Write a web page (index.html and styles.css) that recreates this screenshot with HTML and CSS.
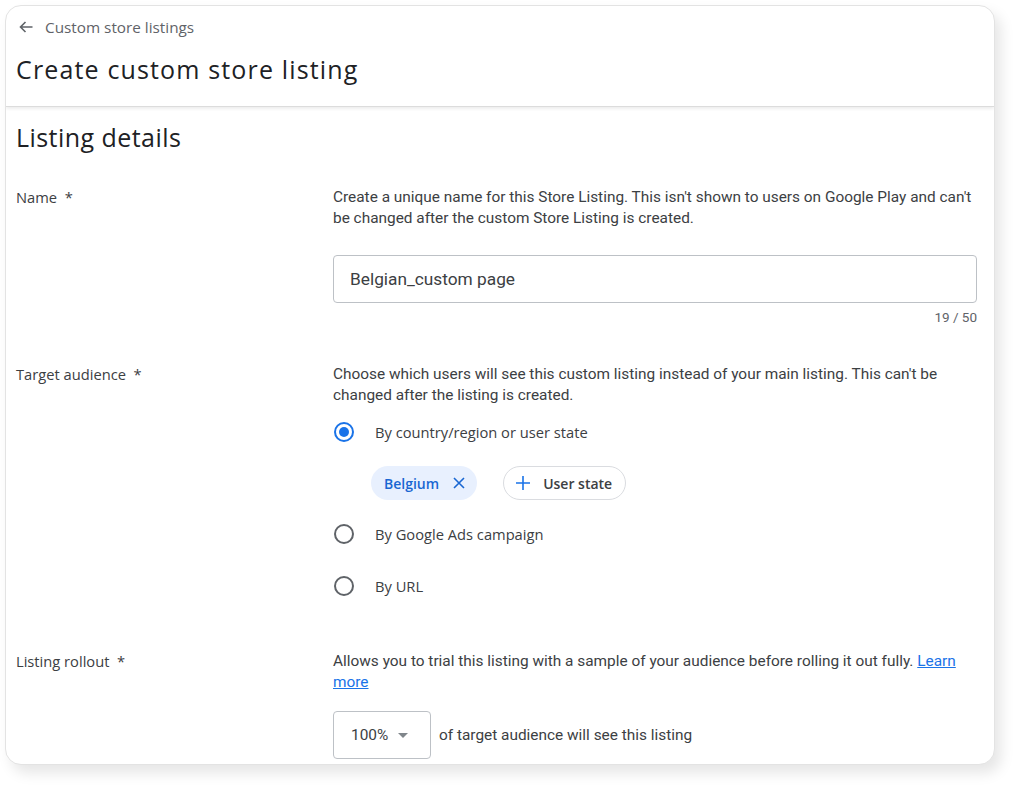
FILE: index.html
```html
<!DOCTYPE html>
<html>
<head>
<meta charset="utf-8">
<link rel="stylesheet" href="styles.css">
</head>
<body>
<div class="stage">
  <div class="card">
    <header class="page-header">
      <div class="crumb">
        <svg class="crumb-arrow" width="14" height="12" viewBox="0 0 14 12"><path d="M13.5 6H1.5M6.5 1L1.5 6L6.5 11" stroke="#5f6368" stroke-width="1.6" fill="none"/></svg>
        <span>Custom store listings</span>
      </div>
      <h1 class="title">Create custom store listing</h1>
    </header>
    <main class="content">
      <h2 class="section-title">Listing details</h2>

      <div class="row row-name">
        <div class="label">Name&nbsp; *</div>
        <div class="field">
          <p class="desc">Create a unique name for this Store Listing. This isn't shown to users on Google Play and can't be changed after the custom Store Listing is created.</p>
          <div class="input">Belgian_custom page</div>
          <div class="counter">19 / 50</div>
        </div>
      </div>

      <div class="row row-audience">
        <div class="label">Target audience&nbsp; *</div>
        <div class="field">
          <p class="desc">Choose which users will see this custom listing instead of your main listing. This can't be changed after the listing is created.</p>
          <div class="radio-opt">
            <span class="radio checked"></span>
            <span class="radio-label">By country/region or user state</span>
          </div>
          <div class="chips">
            <span class="chip chip-selected">Belgium
              <svg class="chip-x" width="14" height="14" viewBox="0 0 14 14"><path d="M2 2L12 12M12 2L2 12" stroke="#1967d2" stroke-width="1.6" fill="none"/></svg>
            </span>
            <span class="chip chip-outline">
              <svg class="chip-plus" width="16" height="16" viewBox="0 0 16 16"><path d="M8 1V15M1 8H15" stroke="#1a73e8" stroke-width="1.6" fill="none"/></svg>
              User state
            </span>
          </div>
          <div class="radio-opt">
            <span class="radio"></span>
            <span class="radio-label">By Google Ads campaign</span>
          </div>
          <div class="radio-opt">
            <span class="radio"></span>
            <span class="radio-label">By URL</span>
          </div>
        </div>
      </div>

      <div class="row row-rollout">
        <div class="label">Listing rollout&nbsp; *</div>
        <div class="field">
          <p class="desc">Allows you to trial this listing with a sample of your audience before rolling it out fully. <a href="#" class="link">Learn more</a></p>
          <div class="rollout-line">
            <div class="select">100% <span class="caret"></span></div>
            <span class="rollout-text">of target audience will see this listing</span>
          </div>
        </div>
      </div>
    </main>
  </div>
</div>
</body>
</html>
```

FILE: styles.css
```css
html, body {
  margin: 0;
  padding: 0;
  background: #ffffff;
}
body {
  font-family: Roboto, "Liberation Sans", sans-serif;
  color: #3c4043;
}
.stage {
  padding: 5px 30px 30px 5px;
}
.card {
  width: 988px;
  height: 758px;
  border: 1px solid #e3e3e3;
  border-radius: 16px;
  background: #fff;
  box-shadow: 6px 8px 14px rgba(0,0,0,0.10);
  overflow: hidden;
}
.page-header {
  height: 101px;
  border-bottom: 1px solid #dcdcdc;
  box-shadow: 0 2px 3px rgba(0,0,0,0.07);
  padding: 0 0 0 10px;
  box-sizing: border-box;
}
.crumb {
  display: flex;
  align-items: center;
  height: 22px;
  padding-top: 10px;
  color: #5f6368;
  font-family: "Open Sans", sans-serif;
  font-size: 15.3px;
}
.crumb-arrow {
  margin-left: 3px;
  margin-right: 12px;
}
.title {
  margin: 15px 0 0 0;
  font-family: "Open Sans", sans-serif;
  font-weight: 500;
  font-size: 25px;
  letter-spacing: 1.15px;
  line-height: 32px;
  color: #202124;
}
.content {
  padding: 0 17px 0 10px;
}
.section-title {
  margin: 14px 0 0 0;
  font-family: "Open Sans", sans-serif;
  font-weight: 500;
  font-size: 25px;
  letter-spacing: 0.45px;
  line-height: 32px;
  color: #202124;
}
.row {
  display: flex;
}
.label {
  width: 317px;
  flex: none;
  font-family: "Open Sans", sans-serif;
  font-size: 14.7px;
  line-height: 21px;
  color: #3c4043;
}
.field {
  flex: 1;
}
.desc {
  margin: 0;
  font-size: 15.4px;
  line-height: 21px;
  color: #3c4043;
}
.row-name { margin-top: 34px; }
.row-audience { margin-top: 39px; }
.row-rollout { margin-top: 45px; }

.input {
  margin-top: 26px;
  height: 48px;
  box-sizing: border-box;
  border: 1px solid #bdc1c6;
  border-radius: 4px;
  padding: 0 16px;
  display: flex;
  align-items: center;
  font-size: 17.3px;
  color: #3c4043;
}
.counter {
  text-align: right;
  font-size: 13.5px;
  line-height: 16px;
  margin-top: 6px;
  color: #5f6368;
}
.radio-opt {
  display: flex;
  align-items: center;
  height: 40px;
  margin-top: 6px;
}
.chips + .radio-opt { margin-top: 14px; }
.radio-opt + .radio-opt { margin-top: 12px; }
.radio {
  width: 20px;
  height: 20px;
  box-sizing: border-box;
  border: 2px solid #5f6368;
  border-radius: 50%;
  margin-left: 1px;
  margin-right: 21px;
  position: relative;
  flex: none;
}
.radio.checked {
  border-color: #1a73e8;
}
.radio.checked::after {
  content: "";
  position: absolute;
  left: 3px;
  top: 3px;
  width: 10px;
  height: 10px;
  border-radius: 50%;
  background: #1a73e8;
}
.radio-label {
  font-family: "Open Sans", sans-serif;
  font-size: 14.7px;
  color: #3c4043;
}
.chips {
  display: flex;
  gap: 26px;
  margin-top: 14px;
  padding-left: 38px;
}
.chip {
  height: 34px;
  box-sizing: border-box;
  border-radius: 17px;
  display: inline-flex;
  align-items: center;
  font-family: "Open Sans", sans-serif;
  font-weight: 600;
  font-size: 14px;
}
.chip-selected {
  background: #e8f0fe;
  color: #1967d2;
  padding: 0 11px 0 13px;
}
.chip-x { margin-left: 13px; }
.chip-outline {
  border: 1px solid #dadce0;
  color: #3c4043;
  padding: 0 13px 0 11px;
}
.chip-plus { margin-right: 12px; }
.link {
  color: #1a73e8;
  text-decoration: underline;
}
.rollout-line {
  display: flex;
  align-items: center;
  margin-top: 18px;
}
.select {
  width: 98px;
  height: 48px;
  box-sizing: border-box;
  border: 1px solid #bdc1c6;
  border-radius: 4px;
  padding-left: 17px;
  display: flex;
  align-items: center;
  font-size: 15.4px;
  color: #3c4043;
}
.caret {
  width: 0;
  height: 0;
  border-left: 5px solid transparent;
  border-right: 5px solid transparent;
  border-top: 5px solid #80868b;
  margin-left: 10px;
}
.rollout-text {
  margin-left: 8px;
  font-size: 15.4px;
  color: #3c4043;
}
```
